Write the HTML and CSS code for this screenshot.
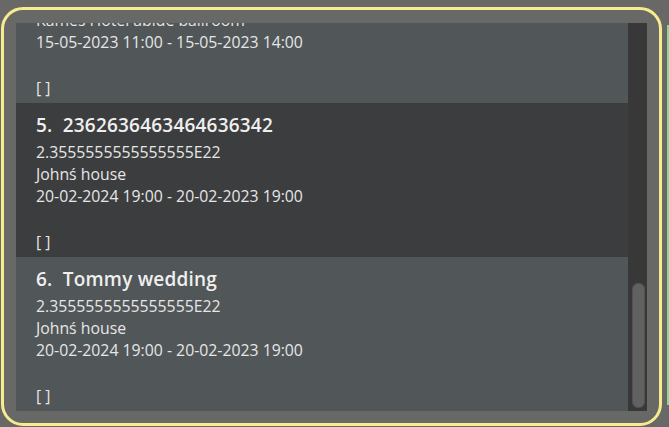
FILE: index.html
```html
<!DOCTYPE html>
<html>
<head>
<meta charset="utf-8">
<link rel="stylesheet" href="styles.css">
</head>
<body>
<div class="panel">
  <div class="list">
    <div class="items">
      <div class="card light partial">
        <div class="line">Kames Hotel abide ballroom</div>
        <div class="line">15-05-2023 11:00 - 15-05-2023 14:00</div>
        <div class="spacer"></div>
        <div class="line">[ ]</div>
      </div>
      <div class="card dark">
        <div class="title">5.&nbsp;&nbsp;2362636463464636342</div>
        <div class="line">2.3555555555555555E22</div>
        <div class="line">Johnś house</div>
        <div class="line">20-02-2024 19:00 - 20-02-2023 19:00</div>
        <div class="spacer"></div>
        <div class="line">[ ]</div>
      </div>
      <div class="card light">
        <div class="title">6.&nbsp;&nbsp;Tommy wedding</div>
        <div class="line">2.3555555555555555E22</div>
        <div class="line">Johnś house</div>
        <div class="line">20-02-2024 19:00 - 20-02-2023 19:00</div>
        <div class="spacer"></div>
        <div class="line">[ ]</div>
      </div>
    </div>
  </div>
  <div class="track"><div class="thumb"></div></div>
</div>
<div class="edge"></div>
</body>
</html>
```

FILE: styles.css
```css
html, body {
  margin: 0;
  height: 100%;
}
body {
  background: #686866;
  display: flex;
  align-items: flex-start;
  padding: 7px 0 0 1px;
  box-sizing: border-box;
  overflow: hidden;
  font-family: "Open Sans", "Noto Sans", sans-serif;
}
.panel {
  box-sizing: border-box;
  width: 661px;
  height: 419px;
  border: 3px solid #f6eb8f;
  border-radius: 22px;
  padding: 13px 12px 12px 12px;
  display: flex;
  flex-shrink: 0;
}
.list {
  flex: 1;
  overflow: hidden;
  display: flex;
  flex-direction: column;
  justify-content: flex-end;
}
.items {
  display: flex;
  flex-direction: column;
  flex-shrink: 0;
}
.card {
  height: 154px;
  box-sizing: border-box;
  padding: 9px 0 0 20px;
  color: #e6e6e6;
  flex-shrink: 0;
}
.card.partial {
  padding-top: 60px;
}
.light { background: #515659; }
.dark { background: #3c3d3e; }
.title {
  font-size: 19px;
  font-weight: 600;
  letter-spacing: 0.2px;
  line-height: 26px;
  margin-bottom: 3px;
  color: #efefef;
  white-space: nowrap;
}
.line {
  font-size: 15.8px;
  line-height: 22px;
  white-space: nowrap;
}
.spacer { height: 24px; }
.track {
  width: 19px;
  background: #383838;
  display: flex;
  flex-direction: column;
  padding: 0 2px 3px 4px;
  box-sizing: border-box;
}
.thumb {
  margin-top: auto;
  height: 125px;
  background: #616161;
  border: 1px solid #515151;
  border-radius: 6px;
  box-sizing: border-box;
}
.edge {
  width: 2px;
  height: 380px;
  margin: 18px 0 0 5px;
  background: #8fd98f;
  flex-shrink: 0;
}
```
